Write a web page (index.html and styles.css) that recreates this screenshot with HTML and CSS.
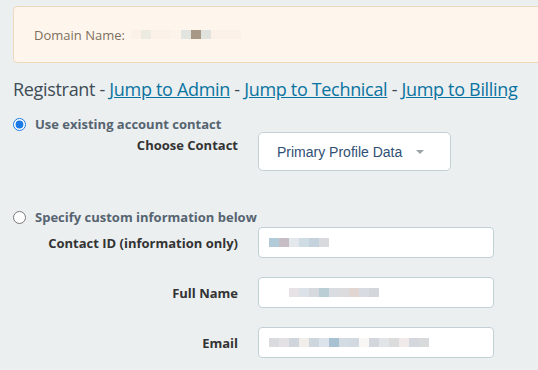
FILE: index.html
```html
<!DOCTYPE html>
<html lang="en">
<head>
    <meta charset="utf-8">
    <title>Domain Contacts</title>
    <link rel="stylesheet" href="styles.css">
</head>
<body>
<div class="page">
    <div class="alert">
        <span class="alert-label">Domain Name:</span>
        <span class="blur">
            <i style="background:#fbf1e8;width:10px"></i><i style="background:#ecebe2;width:10px"></i><i style="background:#fbf1e8;width:20px"></i><i style="background:#fcf3ea;width:10px"></i><i style="background:#e2e4e0;width:10px"></i><i style="background:#a89886;width:10px"></i><i style="background:#e0e2de;width:10px"></i><i style="background:#fbf1e8;width:30px"></i>
        </span>
    </div>

    <h3 class="contact-title">Registrant - <a href="#">Jump to Admin</a> - <a href="#">Jump to Technical</a> - <a href="#">Jump to Billing</a></h3>

    <form class="contact-form">
        <label class="radio"><input type="radio" name="contact_type" checked><span>Use existing account contact</span></label>
        <div class="row row-select">
            <span class="row-label">Choose Contact</span>
            <div class="select">Primary Profile Data <b class="caret"></b></div>
        </div>

        <label class="radio radio-custom"><input type="radio" name="contact_type"><span>Specify custom information below</span></label>
        <div class="row">
            <span class="row-label">Contact ID (information only)</span>
            <div class="input"><span class="blur"><i style="background:#b3cbd8;width:10px"></i><i style="background:#c6bec4;width:10px"></i><i style="background:#e3e8ec;width:10px"></i><i style="background:#cfdce4;width:10px"></i><i style="background:#c4d2dd;width:10px"></i><i style="background:#d9dadd;width:10px"></i></span></div>
        </div>
        <div class="row">
            <span class="row-label">Full Name</span>
            <div class="input"><span class="blur indent"><i style="background:#e6e2e6;width:10px"></i><i style="background:#dde2e8;width:10px"></i><i style="background:#d6d9dd;width:10px"></i><i style="background:#b9ced5;width:10px"></i><i style="background:#d9dde1;width:10px"></i><i style="background:#dcdcdf;width:10px"></i><i style="background:#e2d6d2;width:10px"></i><i style="background:#d8dbe1;width:10px"></i><i style="background:#d3d6da;width:10px"></i></span></div>
        </div>
        <div class="row">
            <span class="row-label">Email</span>
            <div class="input"><span class="blur"><i style="background:#d9dbdf;width:10px"></i><i style="background:#e4e1e5;width:10px"></i><i style="background:#d0d5dc;width:10px"></i><i style="background:#f1eeea;width:10px"></i><i style="background:#ccd6dc;width:10px"></i><i style="background:#dce3ea;width:10px"></i><i style="background:#a9c2d3;width:10px"></i><i style="background:#d3dbe3;width:10px"></i><i style="background:#d2d9e1;width:10px"></i><i style="background:#f8f7f6;width:10px"></i><i style="background:#d3d7dd;width:10px"></i><i style="background:#e2e5e8;width:10px"></i><i style="background:#dcdcdc;width:10px"></i><i style="background:#f0eaea;width:10px"></i><i style="background:#d4d8de;width:10px"></i><i style="background:#d8dadc;width:10px"></i></span></div>
        </div>
    </form>
</div>
</body>
</html>
```

FILE: styles.css
```css
html, body { margin: 0; background: #ebeff0; }
body { font-family: "Open Sans", "Noto Sans", sans-serif; color: #333; overflow: hidden; }

.page { padding: 6px 0 0 13px; }

.alert {
    display: flex;
    align-items: center;
    height: 55px;
    margin-right: -20px;
    padding-left: 20px;
    border: 1px solid #efd7bd;
    border-radius: 4px;
    background-color: #fef6ec;
    color: #7f6f5e;
    font-size: 13px;
}
.alert-label { margin-right: 6px; }

.blur { display: inline-flex; height: 9px; }
.blur i { display: block; height: 100%; }

.contact-title {
    margin: 14px 0 0;
    font-weight: 400;
    font-size: 18px;
    line-height: 24px;
    color: #3e4c55;
    letter-spacing: -0.32px;
}
.contact-title a { color: #0a74a0; }

.contact-form { margin: 0; }

.radio { display: flex; align-items: center; height: 18px; margin-top: 14px; font-weight: 700; font-size: 13px; color: #566470; }
.radio input { width: 13px; height: 13px; margin: 0 9px 0 0; accent-color: #1b7ae3; }
.radio-custom { margin-top: 37px; }

.row { display: grid; grid-template-columns: 225px 236px; column-gap: 20px; align-items: center; margin-top: 19px; }
.row-label { text-align: right; font-weight: 700; font-size: 13px; color: #333; }
.row-select { align-items: start; margin-top: -1px; }
.row-select .row-label { padding-top: 4px; }
.radio-custom + .row { margin-top: 1px; }

.select {
    display: flex;
    align-items: center;
    width: 193px;
    height: 39px;
    box-sizing: border-box;
    padding-left: 18px;
    border: 1px solid #c6cfd4;
    border-radius: 5px;
    background: #fff;
    font-family: "Liberation Sans", Arial, sans-serif;
    font-size: 14px;
    color: #2f4f74;
}
.caret {
    margin-left: 14px;
    border-left: 4px solid transparent;
    border-right: 4px solid transparent;
    border-top: 4px solid #9aa3a8;
}

.input {
    display: flex;
    align-items: center;
    height: 31px;
    box-sizing: border-box;
    padding-left: 10px;
    border: 1px solid #c2d0d7;
    border-radius: 4px;
    background: #fff;
}
.input .indent { margin-left: 20px; }
```
